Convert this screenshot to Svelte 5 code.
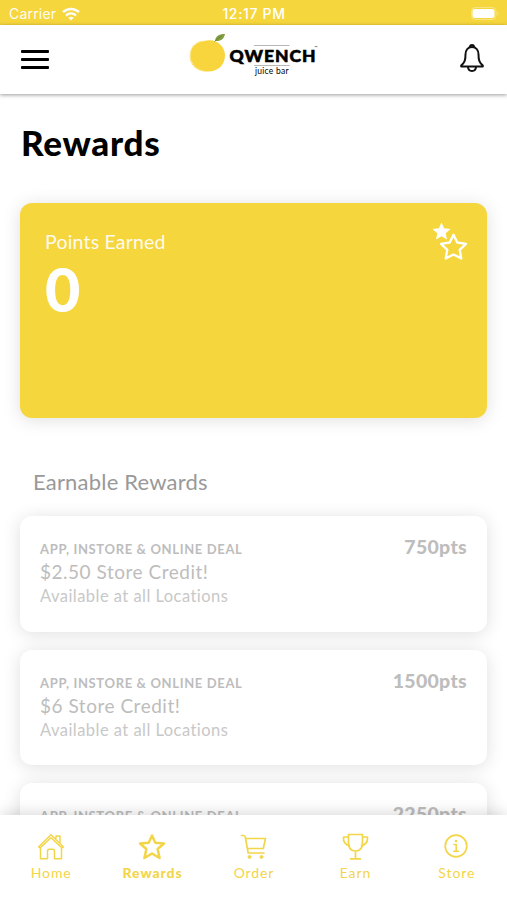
<script>
  export let points = 0;

  const rewards = [
    { kind: 'APP, INSTORE & ONLINE DEAL', name: '$2.50 Store Credit!', where: 'Available at all Locations', cost: 750 },
    { kind: 'APP, INSTORE & ONLINE DEAL', name: '$6 Store Credit!', where: 'Available at all Locations', cost: 1500 },
    { kind: 'APP, INSTORE & ONLINE DEAL', name: '', where: '', cost: 2250 }
  ];

  const tabs = ['Home', 'Rewards', 'Order', 'Earn', 'Store'];
  let active = 'Rewards';
</script>

<div class="app">
  <div class="status">
    <div class="carrier">
      <span>Carrier</span>
      <svg width="18" height="14" viewBox="0 0 18 14" fill="none" stroke="#fff" stroke-width="2.5">
        <path d="M1 5.2C5.5 .9 12.5 .9 17 5.2M4 8.5C7 5.8 11 5.8 14 8.5" />
        <path d="M9 13.6L6.2 10.8Q9 8.6 11.8 10.8Z" fill="#fff" stroke="none" />
      </svg>
    </div>
    <span class="time">12:17 PM</span>
    <div class="battery">
      <svg width="28" height="13" viewBox="0 0 28 13">
        <rect x=".5" y=".5" width="24.500" height="12" rx="3.500" fill="none" stroke="#fff" stroke-opacity=".35" />
        <rect x="1.500" y="2" width="22" height="9" rx="2" fill="#fff" />
        <path d="M26.300 4.500Q28.500 6.500 26.300 8.500Z" fill="#fff" opacity=".45" />
      </svg>
    </div>
  </div>

  <header>
    <button class="menu" aria-label="Menu">
      <span></span><span></span><span></span>
    </button>
    <svg class="logo" width="130" height="44" viewBox="0 0 130 44">
      <path d="M18 7.500C27 5.500 36 13 36 22C36 32 29 39 18 38.500C8 38.500 .5 32 .8 23C.8 14 8 8 18 7.500Z" fill="#f8d53d" />
      <path d="M5 12C1 16 .2 25 3 30M3.500 14Q8 8 15 8.200M1.500 27Q6 37 15 38.200" fill="none" stroke="#fbe78c" stroke-width="1" />
      <path d="M26 8C26.500 3 30 .8 36 1C35 6 32 8.500 26 8Z" fill="#849e43" />
      <path d="M25.500 8.500Q29 5 33 3" fill="none" stroke="#5d782b" stroke-width=".7" />
      <path d="M65 12.500H100.500M65 32.500H100.500" stroke="#999" stroke-width=".7" />
      <text class="brand" x="40.500" y="28.800" textLength="86">QWENCH</text>
      <text class="sub" x="66" y="40.500" textLength="33.500">juice bar</text>
      <text class="tm" x="125.500" y="15.500">™</text>
    </svg>
    <button class="bell" aria-label="Notifications">
      <svg width="24" height="28" viewBox="0 0 24 28" fill="none" stroke="#111" stroke-width="2" stroke-linejoin="round">
        <path d="M12 3C8 3 5.500 6 5.500 10.500C5.500 16.500 4.500 18.500 1.200 21.500V22.500H22.800V21.500C19.500 18.500 18.500 16.500 18.500 10.500C18.500 6 16 3 12 3Z" />
        <path d="M10 3Q10 1 12 1Q14 1 14 3M8 23Q8.300 27 12 27Q15.700 27 16 23" />
      </svg>
    </button>
  </header>

  <main>
    <h1>Rewards</h1>

    <section class="points">
      <div>
        <div class="points-label">Points Earned</div>
        <div class="points-value">{points}</div>
      </div>
      <svg width="36" height="40" viewBox="0 0 36 40">
        <path d="M9.500 -.5L12.100 5.300L18.500 6L13.700 10.200L15 16.500L9.500 13.300L4 16.500L5.300 10.200L.5 6L6.900 5.300Z" fill="#fff" />
        <path d="M21.500 11.800L25.300 19.500L34 20.800L27.700 26.800L29.300 35.500L21.500 31.400L13.700 35.500L15.300 26.800L9 20.800L17.700 19.500Z" fill="#f6d63d" stroke="#fff" stroke-width="2.300" stroke-linejoin="round" />
      </svg>
    </section>

    <h2>Earnable Rewards</h2>

    <div class="rewards">
      {#each rewards as reward}
        <article class="reward">
          <div>
            <div class="reward-kind">{reward.kind}</div>
            <div class="reward-name">{reward.name}</div>
            <div class="reward-where">{reward.where}</div>
          </div>
          <div class="reward-cost">{reward.cost}pts</div>
        </article>
      {/each}
    </div>
  </main>

  <nav>
    {#each tabs as tab}
      <button class="tab" class:active={tab === active} on:click={() => (active = tab)}>
        <svg width="30" height="28" viewBox="0 0 30 28" fill="none" stroke="currentColor" stroke-width="1.700" stroke-linejoin="round" stroke-linecap="round">
          {#if tab === 'Home'}
            <path d="M2.500 14L15 1.800L27.500 14L26 15L15 4.800L4 15ZM4.500 15V25.800H11.500V18Q11.500 16.300 13.200 16.300H16.800Q18.500 16.300 18.500 18V25.800H25.500V15M20 5V3H24V9.500" stroke-width="1.500" />
          {:else if tab === 'Rewards'}
            <path d="M15 2.500L18.300 9.700L27 10.500L20.600 16L22.600 25L15 20.500L7.400 25L9.400 16L3 10.500L11.700 9.700Z" stroke-width="2.500" />
          {:else if tab === 'Order'}
            <path d="M3.500 2.500H5.500Q7 2.500 7.400 4.500L10.200 20H26M7.800 5.500H27.500L25.300 15.500H9.500" />
            <circle cx="11.500" cy="24" r="1.400" fill="currentColor" stroke-width="1" />
            <circle cx="23.500" cy="24" r="1.400" fill="currentColor" stroke-width="1" />
          {:else if tab === 'Earn'}
            <path d="M8.500 1.500H22.500V9.500Q22.500 18 15.500 18Q8.500 18 8.500 9.500ZM8.500 4H3.500Q3 11.500 9.500 12.500M22.500 4H27.500Q28 11.500 21.500 12.500M15.500 18V25.500M10.500 25.800H20.500" />
          {:else}
            <circle cx="15" cy="13" r="10.800" />
            <path d="M13 11.500H15.200V18M12.800 18.300H17.500" stroke-width="1.600" />
            <circle cx="15" cy="8" r="1.300" fill="currentColor" stroke="none" />
          {/if}
        </svg>
        <span>{tab}</span>
      </button>
    {/each}
  </nav>
</div>

<style>
  :global(body) {
    background: #fff;
  }

  .app {
    display: flex;
    flex-direction: column;
    height: 100vh;
    overflow: hidden;
    background: #fff;
    font-family: Lato, sans-serif;
    font-variant-ligatures: none;
  }

  button {
    padding: 0;
    border: 0;
    background: none;
    font: inherit;
  }

  svg {
    display: block;
  }

  .status {
    display: grid;
    grid-template-columns: 1fr auto 1fr;
    align-items: center;
    flex: none;
    height: 25px;
    box-sizing: border-box;
    padding: 2px 8px 0 9px;
    background: #f6d63d;
    color: #fff;
    font-family: Inter, sans-serif;
    font-size: 14px;
  }

  .carrier {
    display: flex;
    align-items: center;
    gap: 6px;
    letter-spacing: 0.2px;
    opacity: 0.95;
  }

  .time {
    font-size: 14px;
    font-weight: 500;
    letter-spacing: 0.65px;
  }

  .battery {
    justify-self: end;
  }

  header {
    display: flex;
    justify-content: space-between;
    flex: none;
    height: 69px;
    box-sizing: border-box;
    padding: 8px 23px 0 21px;
    box-shadow: 0 1px 4px rgba(0, 0, 0, 0.4);
    z-index: 1;
  }

  .menu {
    display: flex;
    flex-direction: column;
    gap: 5px;
    width: 28px;
    margin-top: 17px;
    height: 19px;
  }

  .menu span {
    height: 3px;
    border-radius: 1px;
    background: #000;
  }

  .logo {
    margin-right: 1px;
    overflow: visible;
  }

  .brand {
    font: 900 17.5px Lato, sans-serif;
    stroke: #000;
    stroke-width: 0.6px;
  }

  .sub {
    font: 8.5px Lato, sans-serif;
  }

  .tm {
    font: 4px Lato, sans-serif;
  }

  .bell {
    align-self: flex-start;
    margin-top: 11px;
  }

  main {
    flex: 1;
    min-height: 0;
    overflow: hidden;
    padding: 0 20px;
  }

  h1 {
    margin: 27px 0 0 1px;
    font-size: 35px;
    line-height: 42px;
    font-weight: 900;
    letter-spacing: 0.75px;
    color: #000;
  }

  .points {
    display: flex;
    justify-content: space-between;
    height: 215px;
    box-sizing: border-box;
    margin-top: 40px;
    padding: 20px 19px 0 25px;
    border-radius: 12px;
    background: #f6d63d;
    box-shadow: 0 2px 18px rgba(0, 0, 0, 0.13);
    color: #fff;
  }

  .points-label {
    margin-top: 7px;
    font-size: 19.5px;
    line-height: 24px;
    letter-spacing: 0.2px;
    opacity: 0.9;
  }

  .points-value {
    margin-top: -1px;
    font-size: 61px;
    line-height: 72px;
    font-weight: 900;
  }

  h2 {
    margin: 51px 0 0 13px;
    font-size: 22px;
    line-height: 26px;
    font-weight: 400;
    letter-spacing: 0.2px;
    color: #999;
  }

  .rewards {
    display: flex;
    flex-direction: column;
    gap: 18px;
    margin-top: 21px;
  }

  .reward {
    display: flex;
    justify-content: space-between;
    height: 115.5px;
    box-sizing: border-box;
    padding: 18px 20px 0;
    border-radius: 12px;
    background: #fff;
    box-shadow: 0 2px 18px rgba(0, 0, 0, 0.13);
    color: #bdbdbd;
  }

  .reward-kind {
    margin-top: 6px;
    font-size: 13px;
    line-height: 18px;
    font-weight: 700;
    letter-spacing: 0.65px;
  }

  .reward-name {
    margin-top: 1px;
    font-size: 19px;
    line-height: 26px;
    letter-spacing: 0.52px;
  }

  .reward-where {
    font-size: 16.5px;
    line-height: 22px;
    letter-spacing: 0.46px;
    color: #c8c8c8;
  }

  .reward-cost {
    margin-top: 1px;
    font-size: 19.5px;
    line-height: 24px;
    font-weight: 900;
    letter-spacing: 0.3px;
  }

  nav {
    display: grid;
    grid-template-columns: repeat(5, 1fr);
    flex: none;
    height: 85px;
    background: #fff;
    box-shadow: 0 -2px 14px rgba(0, 0, 0, 0.15);
    z-index: 1;
  }

  .tab {
    display: flex;
    flex-direction: column;
    align-items: center;
    padding-top: 18px;
    color: #f3d54a;
    font-size: 14px;
    line-height: 18px;
    letter-spacing: 0.9px;
  }

  .tab span {
    margin-top: 3px;
    margin-right: -1px;
  }

  .active {
    font-weight: 900;
  }
</style>
